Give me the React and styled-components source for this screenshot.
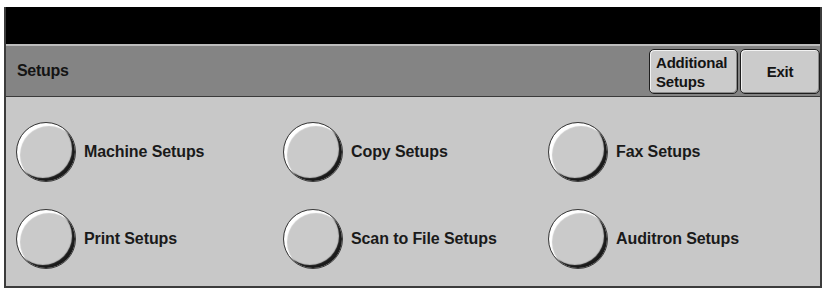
import React from 'react';
import styled, { createGlobalStyle } from 'styled-components';

const GlobalStyle = createGlobalStyle`
  body {
    margin: 0;
    background: #ffffff;
    font-family: "Liberation Sans", Arial, sans-serif;
  }
`;

const Frame = styled.div`
  margin: 7px 0 0 4px;
  width: 814px;
  border-left: 2px solid #3c3c3c;
  border-right: 2px solid #3c3c3c;
  border-bottom: 2px solid #3c3c3c;
  background: #c8c8c8;
`;

const MessageBar = styled.div`
  height: 37px;
  background: #000;
  border-bottom: 2px solid #bdbdbd;
`;

const Header = styled.div`
  display: flex;
  align-items: center;
  height: 50px;
  background: #848484;
  border-bottom: 1px solid #3a3a3a;
  padding: 0 0 0 11px;
`;

const Title = styled.div`
  flex: 1;
  font-size: 16px;
  font-weight: bold;
  color: #141414;
  letter-spacing: -0.3px;
`;

const TabButton = styled.button`
  box-sizing: border-box;
  height: 45px;
  width: ${p => p.$w}px;
  margin: 1px 0 0 2px;
  padding: 0 ${p => (p.$center ? 0 : 6)}px;
  display: flex;
  align-items: center;
  justify-content: ${p => (p.$center ? 'center' : 'flex-start')};
  text-align: left;
  font-family: "Liberation Sans", Arial, sans-serif;
  font-size: 15px;
  font-weight: bold;
  line-height: 19px;
  color: #141414;
  background: #cbcbcb;
  border: 1.5px solid #1e1e1e;
  border-radius: 5px;
  box-shadow: inset 1px 1px 0 #f2f2f2, inset -1px -1px 0 #8a8a8a;
  letter-spacing: -0.2px;
`;

const Grid = styled.div`
  display: grid;
  grid-template-columns: 267px 265px auto;
  row-gap: 27px;
  padding: 25px 0 17px 10px;
`;

const Option = styled.div`
  display: flex;
  align-items: center;
  gap: 8px;
`;

const RoundButton = styled.button`
  box-sizing: border-box;
  width: 60px;
  height: 60px;
  padding: 0;
  border-radius: 50%;
  background: #cacaca;
  border: 1px solid #3a3a3a;
  box-shadow:
    inset 3px 3px 1px #ffffff,
    inset -3px -3px 1px #1a1a1a;
`;

const Label = styled.span`
  font-size: 16px;
  font-weight: bold;
  color: #1a1a1a;
  letter-spacing: -0.1px;
`;

const options = [
  'Machine Setups',
  'Copy Setups',
  'Fax Setups',
  'Print Setups',
  'Scan to File Setups',
  'Auditron Setups',
];

export default function App() {
  return (
    <>
      <GlobalStyle />
      <Frame>
        <MessageBar />
        <Header>
          <Title>Setups</Title>
          <TabButton $w={89}>Additional<br />Setups</TabButton>
          <TabButton $w={80} $center>Exit</TabButton>
        </Header>
        <Grid>
          {options.map(o => (
            <Option key={o}>
              <RoundButton aria-label={o} />
              <Label>{o}</Label>
            </Option>
          ))}
        </Grid>
      </Frame>
    </>
  );
}
